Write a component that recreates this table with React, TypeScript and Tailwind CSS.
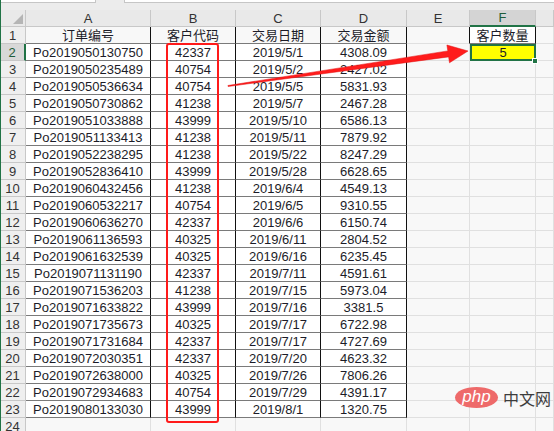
import React from "react";

type Row = [string, string, string, string];

const ROWS: Row[] = [
  ["Po2019050130750", "42337", "2019/5/1", "4308.09"],
  ["Po2019050235489", "40754", "2019/5/2", "2427.02"],
  ["Po2019050536634", "40754", "2019/5/5", "5831.93"],
  ["Po2019050730862", "41238", "2019/5/7", "2467.28"],
  ["Po2019051033888", "43999", "2019/5/10", "6586.13"],
  ["Po2019051133413", "41238", "2019/5/11", "7879.92"],
  ["Po2019052238295", "41238", "2019/5/22", "8247.29"],
  ["Po2019052836410", "43999", "2019/5/28", "6628.65"],
  ["Po2019060432456", "41238", "2019/6/4", "4549.13"],
  ["Po2019060532217", "40754", "2019/6/5", "9310.55"],
  ["Po2019060636270", "42337", "2019/6/6", "6150.74"],
  ["Po2019061136593", "40325", "2019/6/11", "2804.52"],
  ["Po2019061632539", "40325", "2019/6/16", "6235.45"],
  ["Po2019071131190", "42337", "2019/7/11", "4591.61"],
  ["Po2019071536203", "41238", "2019/7/15", "5973.04"],
  ["Po2019071633822", "43999", "2019/7/16", "3381.5"],
  ["Po2019071735673", "40325", "2019/7/17", "6722.98"],
  ["Po2019071731684", "42337", "2019/7/17", "4727.69"],
  ["Po2019072030351", "42337", "2019/7/20", "4623.32"],
  ["Po2019072638000", "40325", "2019/7/26", "7806.26"],
  ["Po2019072934683", "40754", "2019/7/29", "4391.17"],
  ["Po2019080133030", "43999", "2019/8/1", "1320.75"],
];

const GRID = "grid grid-cols-[26px_125px_85px_85px_86px_63px_66px_18px]";
const tableCell = "flex items-center justify-center border-r border-b border-r-[#111] border-b-[#7a7a7a]";
const plainCell = "border-r border-b border-[#e0e0e0]";

function RowHead({ n, active }: { n: number; active?: boolean }) {
  return (
    <div
      className={
        active
          ? "flex items-center justify-center border-b border-[#c8c8c8] border-r-2 border-r-[#217346] bg-[#d8d8d8] text-[#1e5c3a]"
          : "flex items-center justify-center border-r border-b border-[#c8c8c8] bg-[#efefef] text-[#333]"
      }
    >
      {n}
    </div>
  );
}

function ColHead({ label, active }: { label: string; active?: boolean }) {
  return (
    <div
      className={
        active
          ? "flex items-center justify-center border-r border-[#c8c8c8] border-b-2 border-b-[#217346] bg-[#d4d4d4] text-[#1e5c3a]"
          : "flex items-center justify-center border-r border-b border-[#c8c8c8] bg-[#e9e9e9] text-[#333]"
      }
    >
      {label}
    </div>
  );
}

export default function App() {
  return (
    <div className="relative h-[431px] w-[554px] overflow-hidden bg-[#f8f8f8] font-['Liberation_Sans','Noto_Sans_CJK_SC',sans-serif] text-[13px] leading-none text-[#1c1c28]">
      {/* formula bar remnant */}
      <div className="flex h-[10px] bg-[#ececec]">
        <div className="h-[3px] w-[96px] border-r border-b border-[#c6c6c6] bg-white" />
        <div className="w-[28px]" />
        <div className="h-[3px] flex-1 border-l border-b border-[#c6c6c6] bg-white" />
      </div>

      {/* column headers */}
      <div className={`${GRID} h-[17px]`}>
        <div className="relative border-r border-b border-[#c8c8c8] bg-[#e9e9e9]">
          <svg className="absolute right-[2px] bottom-[2px]" width="10" height="10" viewBox="0 0 10 10">
            <polygon points="10,0 10,10 0,10" fill="#b5b5b5" />
          </svg>
        </div>
        <ColHead label="A" />
        <ColHead label="B" />
        <ColHead label="C" />
        <ColHead label="D" />
        <ColHead label="E" />
        <ColHead label="F" active />
        <ColHead label="" />
      </div>

      {/* row 1 */}
      <div className={`${GRID} h-[17px]`}>
        <RowHead n={1} />
        <div className={tableCell}>订单编号</div>
        <div className={tableCell}>客户代码</div>
        <div className={tableCell}>交易日期</div>
        <div className={tableCell}>交易金额</div>
        <div className="border-r border-b border-r-[#111] border-b-[#e0e0e0]" />
        <div className={`${tableCell} bg-white`}>客户数量</div>
        <div className={plainCell} />
      </div>

      {ROWS.map((r, i) => (
        <div key={i} className={`${GRID} h-[17px]`}>
          <RowHead n={i + 2} active={i === 0} />
          {r.map((v, j) => (
            <div key={j} className={`${tableCell} bg-white`}>
              {v}
            </div>
          ))}
          <div className={plainCell} />
          {i === 0 ? (
            <div className="flex items-center justify-center border-2 border-[#217346] bg-[#ffff00]">5</div>
          ) : (
            <div className={plainCell} />
          )}
          <div className={plainCell} />
        </div>
      ))}

      {/* row 24 */}
      <div className={`${GRID} h-[17px]`}>
        <RowHead n={24} />
        {Array.from({ length: 7 }).map((_, j) => (
          <div key={j} className={plainCell} />
        ))}
      </div>

      {/* left window edge */}
      <div className="absolute top-0 left-0 h-full w-[1px] bg-[#217346]" />

      {/* fill handle */}
      <div className="absolute top-[58px] left-[532px] h-[6px] w-[6px] border border-white bg-[#217346]" />

      {/* red highlight box */}
      <div className="absolute top-[43px] left-[166px] h-[380px] w-[53px] rounded-[3px] border-[2.5px] border-[#ff1a1a]" />

      {/* arrow */}
      <svg className="absolute top-0 left-0" width="554" height="431" viewBox="0 0 554 431">
        <polygon
          points="227.9,85.5 447.8,50.9 446.9,45.0 468,51 449.5,62.8 448.6,56.9 228.1,86.5"
          fill="#ff1c1c"
          stroke="#e01010"
          strokeWidth="0.5"
          strokeLinejoin="round"
        />
      </svg>

      {/* watermark */}
      <div className="absolute top-[387px] left-[455px] flex items-center gap-[5px]">
        <div className="flex h-[21px] w-[43px] items-center justify-center rounded-[50%] bg-[#ee6a6a] pb-[2px] font-['Liberation_Sans',sans-serif] text-[17px] italic text-white">
          php
        </div>
        <span className="font-['Noto_Sans_CJK_SC',sans-serif] text-[16px] text-[#3d3d3d]">中文网</span>
      </div>
    </div>
  );
}
